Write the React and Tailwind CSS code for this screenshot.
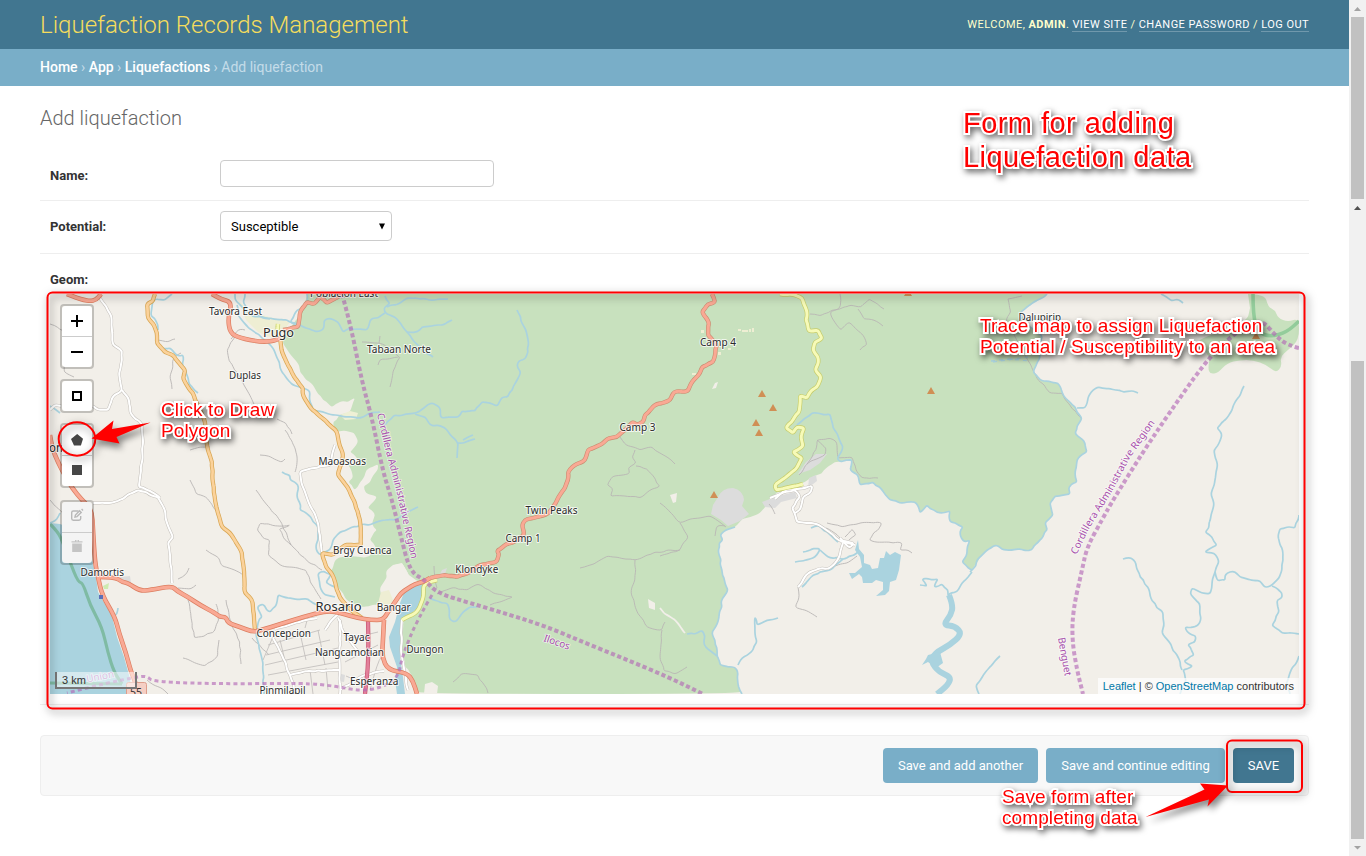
import React from "react";

const REGION_GREEN =
  "308,294 303,306 298,318 285,335 283,343 290,354 297,362 300,372 306,380 313,385 318,394 323,400 332,407 340,402 348,402 355,398 352,406 350,412 342,414 333,422 337,432 346,431 354,433 358,441 350,452 357,458 360,465 348,465 353,478 348,482 354,490 362,480 366,470 378,464 376,472 370,482 364,486 366,493 377,497 368,508 375,514 372,523 377,530 370,540 376,548 370,556 360,557 346,556 335,560 330,573 335,582 340,590 345,598 352,603 363,607 377,605 382,597 380,588 387,577 387,570 393,565 402,563 405,568 408,573 409,579 423,583 424,597 422,607 403,622 402,650 405,667 410,673 418,694 742,694 738,684 738,672 735,667 720,665 717,656 715,640 712,632 715,628 719,618 722,607 721,602 728,590 724,578 722,570 719,555 719,543 723,540 720,535 728,529 735,527 742,519 750,517 760,513 768,505 770,498 790,486 805,482 817,475 835,462 852,460 850,470 858,475 860,485 873,482 882,490 890,500 900,503 915,502 920,513 927,505 934,510 942,513 950,511 950,522 963,527 960,534 965,542 970,540 967,550 965,558 962,562 972,570 980,557 987,550 995,545 1006,550 1017,549 1032,550 1040,540 1047,530 1045,523 1053,515 1050,503 1055,496 1070,494 1069,487 1077,482 1075,472 1078,458 1087,452 1085,443 1075,433 1077,426 1082,418 1072,405 1062,392 1058,383 1040,380 1033,372 1040,358 1039,348 1042,335 1023,322 1020,312 1030,305 1047,294";

const EAST_GREEN =
  "1248,294 1265,294 1268,307 1275,310 1278,318 1288,322 1299,318 1299,340 1288,350 1280,357 1282,366 1276,373 1267,365 1253,360 1240,360 1227,363 1218,373 1210,374 1208,368 1210,357 1198,342 1202,338 1247,322 1250,308";

const RIVERS = [
  "517,310 523,325 527,335 528,352 525,359 518,362 517,367 521,372 516,382 508,397 502,397 497,406 490,403 482,402 475,411 462,411 458,417 450,417 442,418 439,407 432,403 425,407 415,413 406,414 400,416 394,415 388,421 385,425",
  "415,414 425,417 430,425 438,425 445,428 451,436 458,443 457,458",
  "458,443 466,442 475,439",
  "463,440 468,437 473,435",
  "385,296 390,303 384,308 385,313 395,317 401,324 407,332 412,339 422,350 433,357",
  "407,332 416,332 422,327 436,325 443,325 452,320",
  "387,307 395,305 407,298 420,299 435,300 448,299",
  "385,313 378,318 370,320 367,330 358,329 350,328 343,332 338,322 330,318 324,320 323,330 314,331 300,325 287,320 270,318 253,317 243,308 237,302 235,294",
  "245,294 243,302 250,314 270,319",
  "300,325 290,322 297,310 307,305 307,294",
  "237,305 238,315 246,325 262,338 273,348 277,358 280,368 287,379 293,385 303,388 310,392 310,402 313,410 328,414 348,417 360,418 368,414 380,412",
  "172,294 165,300 155,299 152,307 151,316 156,321 158,330",
  "160,348 170,348 176,355 183,355 182,364 187,375 189,384 198,393",
  "282,472 290,475 290,480 298,485 297,498 300,503 300,510 307,514 313,522 318,527 318,540 316,548 320,555 330,550 333,540 340,532 350,528 357,527 363,524 370,525 376,522 383,520 395,520 408,512 418,507",
  "317,605 308,599 290,598 278,595 276,606 270,612 262,604 257,607 262,617 258,623 256,633 259,645 263,663 264,694",
  "335,597 325,595 320,587 318,573 324,571 331,574 326,582 337,588",
  "60,513 55,521 50,523",
  "118,608 116,615 112,616",
  "50,406 55,409 60,413",
  "430,598 438,601 447,603 450,620 455,622 463,612 470,607 477,607",
  "797,425 805,418 812,413 830,414 833,428 839,439 843,447 841,453 837,458 840,462 852,460 850,470 858,475 860,485 873,482 882,490 890,500 900,503 915,502 920,513 927,505 934,510 942,513 950,511 950,522 963,527 960,534 965,542 970,540 967,550 965,558 962,562 972,570",
  "970,572 980,557 987,550 995,545 1006,550 1017,549 1032,550 1040,540 1047,530 1045,523 1053,515 1050,503 1055,496 1070,494 1069,487 1077,482 1075,472 1078,458 1087,452 1085,443 1075,433 1077,426 1082,418 1072,405 1062,392 1058,383 1040,380 1033,372 1040,358 1039,348 1042,335 1023,322 1020,312 1030,305 1047,294",
  "972,572 962,583 957,592 948,595",
  "920,585 927,586 922,579 932,580 938,579 934,587 942,584 948,590 949,597",
  "742,694 738,684 738,672 735,667 720,665 717,656 715,640 712,632 715,628 719,618 722,607 721,602 728,590 724,578 722,570 719,555 719,543 723,540 720,535 728,529 735,527",
  "738,665 742,658 750,653 757,642 755,628 755,617 757,625 767,620 778,618",
  "687,634 694,634 702,630 705,636 704,645 712,652 717,656",
  "795,562 815,557 820,549 812,549 803,552",
  "820,550 828,557 845,559 858,552",
  "802,587 813,575 833,568 843,559",
  "811,528 817,525 827,532 838,542",
  "1077,408 1085,408 1088,398 1093,390 1098,387 1110,389 1116,390 1123,392 1130,391 1138,393",
  "1244,386 1238,398 1232,410 1225,420 1217,428 1222,435 1220,441 1214,450 1217,462 1215,480 1211,495 1214,505 1211,515 1209,528 1205,532 1212,537 1217,545 1205,552 1214,553 1219,562 1215,572 1212,583 1210,594 1202,593 1192,588 1191,595 1200,604 1201,618 1197,626 1185,627 1187,632 1196,636 1195,642 1188,645 1194,655 1184,661 1193,666 1183,670 1186,681 1180,694",
  "1215,572 1218,581 1225,580 1227,573 1233,571 1240,577 1260,581 1265,587 1272,585 1279,578 1282,570 1283,553 1278,536 1280,529 1287,527 1295,528 1299,515",
  "1272,586 1282,593 1282,598 1277,600 1279,612 1272,625 1282,633 1299,634",
  "1123,559 1129,557 1134,560 1140,577 1148,587 1152,601 1163,613 1163,635 1170,643 1178,657 1182,670",
  "1161,294 1170,300 1178,299 1183,303",
  "1000,656 990,667 984,674 976,685 979,694",
  "1299,656 1289,676 1286,684 1290,694",
];

const WHITE_ROADS = [
  "100,298 106,306 111,315 112,330 113,345 122,351 121,364 119,373 122,390 112,398 108,410 98,410 93,406",
  "122,390 129,400 130,412 142,425 143,440 142,462 139,487 150,491 160,498",
  "93,503 107,503 120,500 138,490 158,497 164,508 167,523 173,537 168,543 170,560 172,583",
  "50,410 55,405 61,406",
  "335,445 332,455 330,465 312,468 300,472 302,485 307,498 314,512 318,523 320,540 322,553",
  "273,638 282,655 290,675 296,694",
  "290,675 310,671 340,670",
  "340,620 340,694",
  "340,690 365,675 384,671",
  "317,618 300,622 275,629",
  "340,612 330,622 325,630",
  "338,618 345,634 358,652 375,655",
  "402,619 401,650 404,668 408,690",
  "770,498 782,493 795,490 800,497 792,508 797,522 805,523 817,524 833,535 843,542 855,545",
  "775,499 785,490 805,488 812,486 810,493 803,497 800,510 795,513",
  "843,543 840,555 837,561 830,568 818,569 806,575 798,587",
  "840,538 850,548 854,543 842,541",
];

const TRACKS = [
  "50,324 64,331 64,372 74,377",
  "172,389 170,378 174,358 181,353",
  "235,335 227,350 229,361 240,377 248,392 261,419",
  "245,330 238,330 231,339",
  "285,430 292,441 297,456 295,472",
  "277,419 286,423 292,434",
  "158,340 168,342 175,339",
  "260,455 271,457 282,462 285,459",
  "190,450 200,447 210,447",
  "190,480 196,494 206,497 219,514",
  "256,490 267,505 281,522 291,545 307,561 322,570",
  "291,545 285,540 279,529 290,525 278,526 260,523 257,530 263,538 270,540 268,555 280,565 306,570 310,582 321,599",
  "206,550 219,558 222,566 232,569 243,575",
  "178,579 187,573 189,568",
  "178,588 191,589 196,585",
  "188,600 191,618 194,638 213,633 219,620 216,604",
  "219,640 218,655 205,666 183,658",
  "226,600 229,615 234,630 240,642 241,664",
  "252,638 269,655",
  "50,500 62,512 73,525",
  "147,680 164,690 168,694",
  "362,342 376,343 387,347 400,357 380,359 378,365",
  "380,336 379,343",
  "400,357 393,371 390,387",
  "620,437 626,445 640,450 652,447 667,457 675,464",
  "635,450 632,457 636,463 628,468 630,473 612,477 607,485 613,490 610,496 625,496 640,498 652,489 660,486 647,469 636,466",
  "810,314 820,316 832,310 840,309 851,305 861,307 869,299 884,309",
  "840,294 840,308 830,312 834,321 841,330 849,322 862,334 867,345 860,350",
  "858,309 864,319 874,320 883,326",
  "799,475 810,460 816,450 817,440 830,438 836,441 838,458 852,457 856,470 862,478 878,478",
  "817,440 826,448 825,455 807,464",
  "580,568 594,564 608,556 635,560 655,552 680,550",
  "635,560 635,580 631,593 636,609 647,627 662,630 665,622",
  "662,630 660,655 664,671 675,674 687,667",
  "660,503 670,512 680,523 690,519 710,516 721,523 726,527",
  "680,523 688,536 680,550 660,556",
  "715,536 717,526 725,526",
  "437,594 451,588 467,590 478,584 493,593 513,597 503,601 490,605",
  "437,588 435,577 434,566",
  "453,682 461,674 478,675 488,693",
  "827,523 842,527 860,523 882,523 869,540 875,542 902,543 900,550 908,550 912,553",
  "845,537 852,529 856,535 849,540",
  "826,528 840,538 846,542",
  "798,587 799,598 795,607 805,610 817,617",
  "769,504 775,514",
  "835,566 847,563 857,556",
  "1008,299 1011,312 1006,321 1022,350 1031,365 1040,382 1050,393 1062,393 1070,405 1081,418",
  "1008,299 1022,296",
];

const STREETS = [
  "268,645 320,630",
  "266,655 330,640",
  "265,665 338,648",
  "268,675 338,662",
  "280,640 286,665",
  "300,633 306,660",
  "318,630 325,665",
  "345,640 378,632",
  "345,662 378,645",
  "370,690 378,660 384,655",
  "275,632 263,660",
  "346,676 362,683",
  "308,617 305,628",
  "310,670 313,694",
  "326,668 328,690",
];

const TRUNK_ROADS = [
  "67,294 77,298 84,300 90,301 96,300 101,294",
  "50,435 52,448 58,462 63,472 72,488 82,500 92,510 93,530 95,563 98,577 102,595 115,617 119,633 126,653 131,672 136,683 136,694",
  "98,577 115,577 122,582 128,583 140,591 150,590 172,586 177,591 188,597 200,605 215,613 220,617 226,617 228,623 240,627 253,632 262,630 290,621 317,613 330,611 340,613 358,618 371,620 383,620 388,612 395,602 401,593 407,589 415,584 423,582 430,578",
  "384,620 383,640 382,657 388,670 407,673 413,681 417,694",
  "212,294 220,299 232,302 228,318 230,333 240,338 260,342 274,341 280,338",
];

const MOUNTAIN_ROADS = [
  "430,578 445,575 457,577 470,572 480,565 490,563 497,561 499,554 497,551 505,545 512,543 524,535 522,525 525,520 547,514 553,507 558,498 565,488 568,480 568,472 572,467 585,460 588,450 600,445 607,439 617,437 625,430 633,422 637,425 643,422 645,415 651,409 657,404 670,400 674,392 688,391 692,382 700,373 702,367 713,362 717,345 708,335 709,323 702,312 708,304 715,302 712,294",
  "283,330 298,327 300,312 307,302 314,304 320,297 327,303 334,299 342,294",
];

const ORANGE_ROADS = [
  "155,294 153,301 147,304 148,318 154,325 157,333 157,343 165,352 173,355 179,363 185,370 183,378 188,387 193,393 196,402 200,410 205,422 207,445 212,462 213,483 216,505 222,527 230,533 242,553 244,570 245,593 252,600 254,615 255,630",
  "280,338 282,352 286,361 295,378 303,388 303,395 310,407 322,418 337,432 339,443 343,455 338,475 348,488 355,503 360,520 361,545 345,545 333,555 322,553 326,567 332,574 340,598 350,609 362,618",
];

const YELLOW_ROADS = [
  "780,294 795,295 802,298 807,312 806,320 809,331 818,330 822,338 815,342 813,350 818,357 818,364 815,370 821,377 817,387 811,391 807,398 800,396 799,412 794,418 786,428 793,433 797,427 804,428 801,437 803,446 793,452 798,456 802,458 796,469 785,478 775,485 776,490 790,487 803,484",
  "278,338 278,324",
  "437,580 430,582 424,585 423,598 418,610 412,615 402,620",
];

const BOUNDARIES = [
  "342,294 350,322 362,382 372,418 383,472 392,500 400,533 410,572 425,580 437,593 470,603 510,615 545,626 583,642 625,659 668,677 703,694",
  "1299,348 1287,345 1275,335 1262,320 1247,325 1227,340 1203,365 1170,412 1143,452 1113,500 1103,518 1087,547 1082,570 1073,610 1072,640 1077,670 1083,694",
];
const THIN_BOUNDARIES = [
  "432,595 417,620 402,657 398,678 380,688 360,691 335,686 303,683 227,684 153,682 147,676 137,677 107,683 67,693",
];

const LABELS = [
  ["Poblacion East", 310, 297, 68, 10],
  ["Tavora East", 209, 314.5, 53, 10],
  ["Pugo", 263, 336.5, 31, 13],
  ["Duplas", 229, 378.5, 32, 10],
  ["Tabaan Norte", 367, 353.3, 64, 10],
  ["Maoasoas", 318.5, 465.3, 47.5, 10],
  ["Camp 4", 700, 346.3, 36, 10],
  ["Camp 3", 619.5, 430.5, 36, 10],
  ["Twin Peaks", 525.5, 513.6, 52, 10],
  ["Camp 1", 505.5, 541.6, 35, 10],
  ["Klondyke", 455.3, 572.7, 43, 10],
  ["Bangar", 376.7, 611, 34, 10],
  ["Dungon", 406.5, 653, 37, 10],
  ["Brgy Cuenca", 333, 553.7, 58.5, 10],
  ["Damortis", 80.5, 575.7, 43.5, 10],
  ["Rosario", 315.5, 611.3, 46, 13],
  ["Concepcion", 256.5, 636.7, 54.5, 10],
  ["Tayac", 343.5, 641, 26, 10],
  ["Nangcamotian", 315, 656.3, 69, 10],
  ["Esperanza", 350, 685.3, 48.5, 10],
  ["Pinmilapil", 259.5, 694.2, 46, 10],
  ["on", 49, 451.5, 14, 12],
  ["Dalupirip", 1018.5, 320.5, 42.5, 10],
];

const PEAKS = [
  [762, 394], [773, 408], [756, 423], [759, 433], [714, 495], [931, 391], [908, 293], [1256, 336],
];

// Deterministic offset that depends only on position, so shared borders stay aligned.
function noise(x, y, k) {
  const v = Math.sin(Math.round(x) * 12.9898 + Math.round(y) * 78.233 + k * 37.719) * 43758.5453;
  return (v - Math.floor(v)) * 2 - 1;
}

// Splits long segments, displaces the new points and rounds the corners.
function naturalPath(points, wiggle = 0, closed = false) {
  const src = points.split(" ").map((p) => p.split(",").map(Number));
  const pts = [];
  src.forEach((a, i) => {
    pts.push(a);
    const b = src[i + 1];
    if (!b || !wiggle) return;
    const len = Math.hypot(b[0] - a[0], b[1] - a[1]);
    if (len > 80) return;
    const n = Math.round(len / 4.5);
    for (let j = 1; j < n; j++) {
      const x = a[0] + ((b[0] - a[0]) * j) / n;
      const y = a[1] + ((b[1] - a[1]) * j) / n;
      pts.push([x + noise(x, y, 1) * wiggle, y + noise(x, y, 2) * wiggle]);
    }
  });
  let d = `M${pts[0][0]} ${pts[0][1]}`;
  for (let i = 1; i < pts.length - 1; i++) {
    const [x, y] = pts[i];
    const mx = (x + pts[i + 1][0]) / 2;
    const my = (y + pts[i + 1][1]) / 2;
    d += `Q${x.toFixed(1)} ${y.toFixed(1)} ${mx.toFixed(1)} ${my.toFixed(1)}`;
  }
  const last = pts[pts.length - 1];
  return `${d}L${last[0]} ${last[1]}${closed ? "Z" : ""}`;
}

function Lines({ items, color, width, dash, opacity, wiggle }) {
  return (
    <g fill="none" stroke={color} strokeWidth={width} strokeDasharray={dash} opacity={opacity} strokeLinejoin="round">
      {items.map((p) => (
        <path key={p} d={naturalPath(p, wiggle)} />
      ))}
    </g>
  );
}

function MapTiles() {
  return (
    <svg className="block h-[400px] w-full" viewBox="50 294 1249 400" preserveAspectRatio="none">
      <rect x="50" y="294" width="1249" height="400" fill="#f2efe9" />
      <polygon points="238,300 250,312 273,318 290,322 283,332 272,338 258,332 246,320" fill="#eeeed3" />
      <path d={naturalPath(REGION_GREEN, 1.1, true)} fill="#c8e1be" />
      <path d={naturalPath(EAST_GREEN, 0, true)} fill="#c8e1be" />
      <polygon points="340,415 350,411 358,413 356,419 345,420" fill="#eef0d5" />
      <polygon points="393,565 402,563 409,575 420,583 405,589 395,600 386,594 387,572" fill="#f2efe9" />
      <polygon points="381,592 389,590 393,600 385,612 377,607" fill="#eeeed3" />
      <polygon points="425,684 432,682 438,686 437,694 424,694" fill="#f2efe9" />
      <polygon points="648,599 655,603 655,610 649,608" fill="#f2efe9" />
      <polygon points="670,495 677,493 676,502 673,503" fill="#f2efe9" />
      <polygon points="715,383 718,382 716,388 712,389" fill="#f2efe9" />
      <g fill="#eeeed3">
        <path d="M738 329h3v2h-3zM742 330h6v2h-6zM749 329h2v3h-2zM752 328h2v4h-2zM701 330h3v3h-3zM718 352h3v3h-3zM692 373h4v2h-4zM728 348h3v2h-3z" />
      </g>
      <g fill="#dcdcdc">
        <path d="M718 497Q722 488 733 488Q743 490 744 500L742 506L749 514L740 521L728 526L721 520L711 514L713 505Z" />
        <path d="M798 474L806 462L816 454L827 454L820 463L810 470Z" />
        <path d="M762 502L778 496L795 492L797 498L781 502L775 508L765 507Z" />
        <path d="M809 478L816 475L817 481L808 488Z" />
        <path d="M442 570L447 568L445 574L440 574Z" />
        <path d="M119 577L130 576L131 583L122 582Z" />
        <path d="M338 673L345 675L344 682L338 681Z" />
      </g>
      <path d="M103 586L109 583L108 589L104 589Z" fill="#cdebb0" />
      <polygon
        points="50,523 60,524 70,528 92,560 96,577 98,592 112,616 117,637 124,657 129,675 133,694 50,694"
        fill="#aad3df"
      />
      <Lines items={["50,524 57,531 62,540 70,562 78,582 83,583 90,605 102,627 108,653 114,672 122,684", "50,683 122,684"]} color="#7fbba4" width="3.2" />
      <Lines items={["1253,294 1253,315 1258,332 1270,337 1287,332 1299,321"]} color="#93cc9b" width="3.6" />

      <Lines items={TRACKS} color="#b9b5b4" width="0.9" wiggle={1} />
      <Lines items={STREETS} color="#c4c1be" width="0.9" />
      <Lines items={["660,608 665,614 675,620 680,626 685,633"]} color="#f2efe9" width="1.8" wiggle={0.7} />
      <Lines items={RIVERS} color="#aad3df" width="1.7" wiggle={1.1} />
      <Lines
        items={["949,595 953,605 951,615 943,625 955,626 962,634 950,645 935,653 931,662 939,672 951,677 948,685 937,694"]}
        color="#aad3df"
        width="6"
      />
      <g fill="#aad3df">
        <polygon points="858,540 859,549 864,555 864,563 870,565 872,569 878,568 880,558 884,558 886,551 890,555 895,552 901,555 899,570 896,580 890,582 889,591 885,595 876,596 883,590 883,582 876,580 872,583 863,583 862,577 859,574 852,579 849,573 855,573 862,567 860,557 855,550" />
        <polygon points="928,655 940,652 943,663 936,668 928,662 922,665 926,659" />
        <polygon points="423,583 405,590 400,603 395,622 389,637 390,647 397,667 395,680 397,694 405,694 403,677 400,657 402,620 417,609 424,597" />
      </g>
      <g fill="none" stroke="#aad3df" strokeWidth="1.3" strokeDasharray="4 4">
        <path d="M991 361L1010 359L1030 361M993 362L1028 357" />
      </g>

      <Lines items={WHITE_ROADS} color="#c4c0bb" width="3" wiggle={0.8} />
      <Lines items={WHITE_ROADS} color="#ffffff" width="2" wiggle={0.8} />
      <Lines items={YELLOW_ROADS} color="#c6cd6c" width="4.4" wiggle={0.6} />
      <Lines items={YELLOW_ROADS} color="#f6fab8" width="3" wiggle={0.6} />
      <Lines items={ORANGE_ROADS} color="#d8a653" width="4.2" wiggle={0.5} />
      <Lines items={ORANGE_ROADS} color="#fbd29b" width="2.7" wiggle={0.5} />
      <Lines items={["368,620 369,657 365,694"]} color="#c75571" width="4.2" />
      <Lines items={["368,620 369,657 365,694"]} color="#e3809a" width="2.8" />
      <Lines items={TRUNK_ROADS} color="#dc7e60" width="4.6" />
      <Lines items={MOUNTAIN_ROADS} color="#c98c70" width="4.3" wiggle={0.7} />
      <Lines items={TRUNK_ROADS} color="#f9a994" width="3.2" />
      <Lines items={MOUNTAIN_ROADS} color="#f9a994" width="3.1" wiggle={0.7} />

      <Lines items={BOUNDARIES} color="#b264b4" width="4" dash="4.2 2.6" opacity="0.62" />
      <Lines items={THIN_BOUNDARIES} color="#b264b4" width="3" dash="4 3.2" opacity="0.62" />

      {PEAKS.map(([x, y]) => (
        <path key={`${x}-${y}`} d={`M${x} ${y - 4}l4 7h-8z`} fill="#d08f55" />
      ))}
      <rect x="99" y="595" width="4" height="4" fill="#5c70b8" />
      <rect x="126.5" y="682.5" width="20" height="16" rx="2" fill="#f5cfc4" stroke="#de9e8c" />
      <text x="130" y="695.5" fontSize="10.5" fill="#333" className="font-['Noto_Sans',sans-serif]">55</text>

      <g
        className="font-['Noto_Sans',sans-serif] [paint-order:stroke_fill]"
        fill="#2b2b2b"
        stroke="#ffffff"
        strokeOpacity="0.75"
        strokeWidth="2"
        strokeLinejoin="round"
      >
        {LABELS.map(([t, x, y, w, s]) => (
          <text key={t} x={x} y={y} fontSize={s} textLength={w} lengthAdjust="spacingAndGlyphs">
            {t}
          </text>
        ))}
      </g>

      <defs>
        <path id="west-name" d="M377 414L385.5 450L396.5 492L412.5 564" />
        <path id="east-name" d="M1076.5 555L1089 529L1112 492L1130 458L1156 422" />
      </defs>
      <g
        className="font-['Noto_Sans',sans-serif] [paint-order:stroke_fill]"
        fontSize="10"
        fill="#a74fab"
        stroke="#ffffff"
        strokeOpacity="0.6"
        strokeWidth="1.6"
      >
        <text textLength="149"><textPath href="#west-name">Cordillera Administrative Region</textPath></text>
        <text textLength="154"><textPath href="#east-name">Cordillera Administrative Region</textPath></text>
        <text transform="translate(543 641) rotate(19)" textLength="27">Ilocos</text>
        <text transform="translate(1058 638) rotate(80)" textLength="39">Benguet</text>
        <text transform="translate(87 682.5) rotate(-11)" textLength="28" fill="#b87fc4">Union</text>
      </g>
    </svg>
  );
}

function Toolbar({ className = "", disabled = false, children }) {
  const face = disabled ? "bg-[#f4f4f4]" : "bg-white";
  return (
    <div className={`w-[34px] rounded border-2 border-black/20 bg-clip-padding ${className}`}>
      <div className={`flex flex-col divide-y divide-[#ccc] overflow-hidden rounded-sm ${face}`}>
        {React.Children.map(children, (c) => (
          <button className="flex h-[31px] w-full items-center justify-center last:h-[30px]">{c}</button>
        ))}
      </div>
    </div>
  );
}

function MapControls() {
  return (
    <div className="absolute left-[10px] top-[10px] flex flex-col gap-[10px]">
      <Toolbar>
        <svg width="14" height="14" viewBox="0 0 14 14"><path d="M7 1v12M1 7h12" stroke="#000" strokeWidth="2" /></svg>
        <svg width="14" height="14" viewBox="0 0 14 14"><path d="M1 7h12" stroke="#000" strokeWidth="2" /></svg>
      </Toolbar>
      <Toolbar>
        <svg width="10" height="10" viewBox="0 0 10 10"><rect x="1" y="1" width="8" height="8" fill="none" stroke="#000" strokeWidth="2" /></svg>
      </Toolbar>
      <Toolbar>
        <svg width="12" height="12" viewBox="0 0 12 12"><path d="M6.2 0L12 4.7L9.9 11.6H3L0 5Z" fill="#464646" /></svg>
        <svg className="-mt-0.5" width="10" height="10" viewBox="0 0 10 10"><rect width="10" height="10" fill="#464646" /></svg>
      </Toolbar>
      <Toolbar disabled className="mt-0.5">
        <svg className="-mt-1" width="14" height="14" viewBox="0 0 14 14" fill="none" stroke="#b8b8b8" strokeWidth="1.4">
          <path d="M8.5 3H3.3Q1.7 3 1.7 4.6V10.6Q1.7 12.2 3.3 12.2H9Q10.7 12.2 10.7 10.6V8" />
          <path d="M5 9L5.4 7L9.6 2.8L11.2 4.4L7 8.6Z M11.6 1L13 2.4" />
        </svg>
        <svg className="-mt-1" width="12" height="14" viewBox="0 0 12 14" fill="#c4c4c4">
          <path d="M0.5 2.2H4V1H8V2.2H11.5V3.6H0.5ZM5 1.6V2.2H7V1.6Z" fillRule="evenodd" />
          <path d="M1.2 4.6H10.8V13H1.2Z" />
        </svg>
      </Toolbar>
    </div>
  );
}

const NOTE =
  "absolute whitespace-pre text-[#ff0000] font-['Liberation_Sans',Arial,sans-serif] [paint-order:stroke_fill] [-webkit-text-stroke:4px_white] [stroke-linejoin:round] [filter:drop-shadow(2px_3px_3px_rgba(0,0,0,0.6))]";

function Annotations() {
  return (
    <div className="pointer-events-none absolute inset-0 overflow-hidden">
      <svg className="absolute inset-0 h-full w-full" viewBox="0 0 1366 856">
        <g fill="none" stroke="#ff0000" strokeWidth="2" className="[filter:drop-shadow(2px_3px_4px_rgba(0,0,0,0.55))]">
          <rect x="47.5" y="292.5" width="1257" height="416" rx="5" />
          <rect x="1227" y="740.5" width="75" height="51.5" rx="5" />
          <ellipse cx="77" cy="439" rx="18.3" ry="16.7" />
        </g>
        <g fill="#ff0000" className="[filter:drop-shadow(3px_5px_3px_rgba(0,0,0,0.45))]">
          <path d="M91.5 438.5L113.5 420.5L112 429L150.5 422.5L116.5 437L119.5 443.5Z" />
          <path d="M1228 785.5L1200 783.5L1204.5 789.5L1145.5 817L1209 799.5L1207.5 806.5Z" />
        </g>
      </svg>
      <p className={`${NOTE} left-[963px] top-[106px] text-[29px] leading-[34px] tracking-[0.45px]`}>{"Form for adding\nLiquefaction data"}</p>
      <p className={`${NOTE} left-[980px] top-[315px] text-[19px] leading-[21px] tracking-[0.1px]`}>{"Trace map to assign Liquefaction\nPotential / Susceptibility to an area"}</p>
      <p className={`${NOTE} left-[161px] top-[399px] text-[19px] leading-[21px] tracking-[0.1px]`}>{"Click to Draw\nPolygon"}</p>
      <p className={`${NOTE} left-[1002px] top-[786px] text-[19px] leading-[21px] tracking-[0.1px]`}>{"Save form after\ncompleting data"}</p>
    </div>
  );
}

function Arrow({ down = false, color }) {
  return (
    <svg className="shrink-0" width="17" height="17" viewBox="0 0 17 17">
      <path d={down ? "M5 7H12L8.5 10.5Z" : "M5 11H12L8.5 7Z"} fill={color} />
    </svg>
  );
}

function Scrollbars() {
  return (
    <div className="flex h-full w-[17px] flex-col items-center bg-[#f1f1f1]">
      <Arrow color="#a3a3a3" />
      <div className="h-[182px] w-[13px] bg-[#c1c1c1]" />
      <Arrow color="#505050" />
      <div className="h-[145px]" />
      <div className="h-[478px] w-[13px] bg-[#c1c1c1]" />
      <Arrow down color="#a3a3a3" />
    </div>
  );
}

const LINK = "border-b border-white/25 text-white";

export default function App() {
  return (
    <div className="relative flex h-[856px] w-[1366px] overflow-hidden bg-white font-['Roboto',sans-serif] text-[13px] text-[#333]">
      <div className="flex h-full w-[1349px] flex-col">
        <header className="flex h-[49px] items-center justify-between bg-[#417690] px-10 text-[#ffc]">
          <h1 className="pt-px text-[24px] font-light leading-[49px] text-[#f5dd5d]">Liquefaction Records Management</h1>
          <div className="text-[11px] uppercase leading-[14px] tracking-[0.45px]">
            Welcome, <strong>admin</strong>. <a className={LINK}>View site</a> / <a className={LINK}>Change password</a> /{" "}
            <a className={LINK}>Log out</a>
          </div>
        </header>
        <nav className="h-[37px] bg-[#79aec8] px-10 text-[14px] leading-[37px] text-[#c4dce8]">
          <a className="font-medium text-white">Home</a> › <a className="font-medium text-white">App</a> ›{" "}
          <a className="font-medium text-white">Liquefactions</a> › Add liquefaction
        </nav>
        <main className="px-10 pt-5">
          <h2 className="text-[20px] font-light leading-6 text-[#666]">Add liquefaction</h2>
          <form className="mt-5">
            <div className="flex h-[51px] items-start border-b border-[#eee] px-[10px] pt-[10px]">
              <label className="w-[170px] pt-[8px] font-bold leading-[15px]">Name:</label>
              <input className="h-[27px] w-[274px] rounded border border-[#ccc]" />
            </div>
            <div className="flex h-[53px] items-start border-b border-[#eee] px-[10px] pt-[10px]">
              <label className="w-[170px] pt-[8px] font-bold leading-[15px]">Potential:</label>
              <div className="flex h-[30px] w-[172px] items-center justify-between rounded border border-[#ccc] pl-[10px] pr-[6px] text-black">
                <span className="pt-0.5">Susceptible</span>
                <svg width="6" height="7" viewBox="0 0 6 7"><path d="M0 0.5H6L3 6.5Z" fill="#000" /></svg>
              </div>
            </div>
            <div className="h-[451px] border-b border-[#eee] px-[10px] pt-[18px]">
              <label className="block h-[22px] font-bold leading-[15px]">Geom:</label>
              <div className="relative h-[400px] overflow-hidden">
                <MapTiles />
                <MapControls />
                <div className="absolute bottom-[5px] left-[5px] h-[17px] w-[82px] border-2 border-t-0 border-[#777] bg-white/50 px-[5px] font-['Liberation_Sans',sans-serif] text-[11px] leading-[16px]">
                  3 km
                </div>
                <div className="absolute bottom-0 right-0 h-4 bg-white/70 px-[5px] font-['Liberation_Sans',sans-serif] text-[11px] leading-4">
                  <a className="text-[#0078a8]">Leaflet</a> | © <a className="text-[#0078a8]">OpenStreetMap</a> contributors
                </div>
              </div>
            </div>
            <div className="mt-[30px] flex h-[61px] justify-end gap-2 rounded border border-[#eee] bg-[#f8f8f8] pr-[14px] pt-[12px] text-white">
              <button type="button" className="h-[35px] w-[155px] rounded bg-[#79aec8]">Save and add another</button>
              <button type="button" className="h-[35px] w-[179px] rounded bg-[#79aec8]">Save and continue editing</button>
              <button type="button" className="h-[35px] w-[61px] rounded bg-[#417690]">SAVE</button>
            </div>
          </form>
        </main>
      </div>
      <Scrollbars />
      <Annotations />
    </div>
  );
}
